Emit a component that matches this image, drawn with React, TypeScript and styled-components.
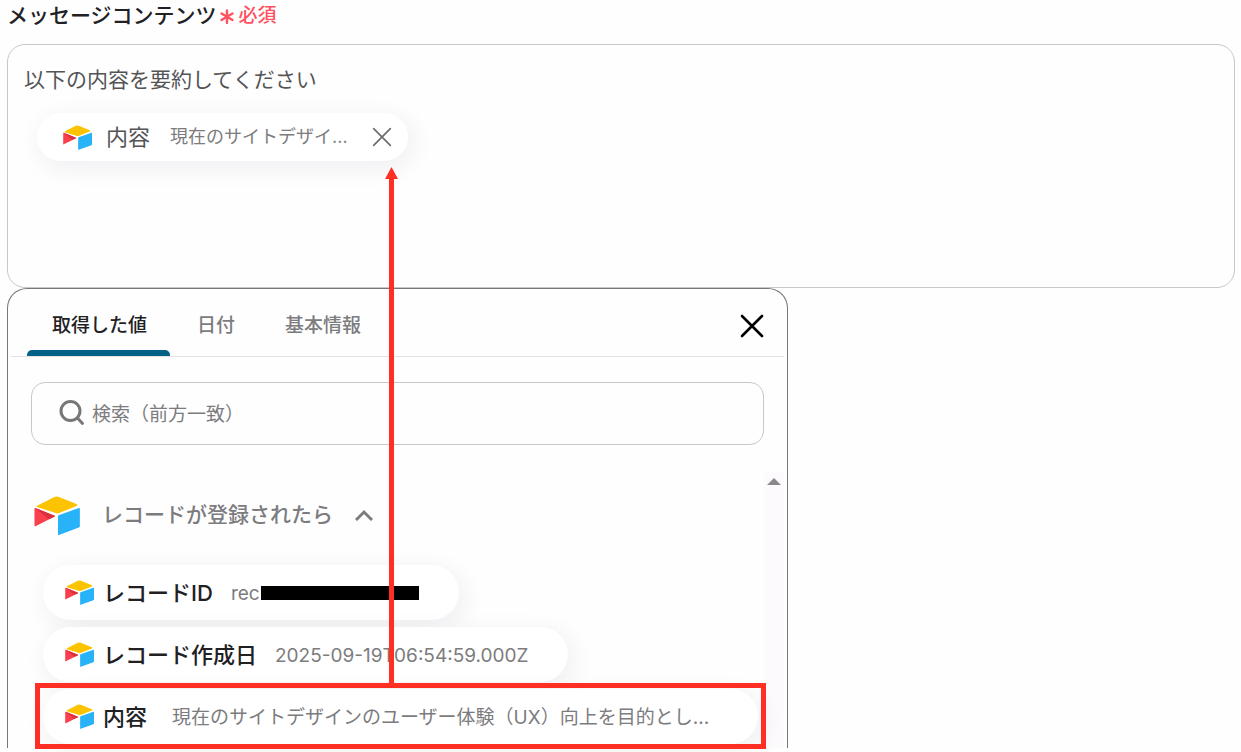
import React, { useState } from "react";
import styled, { createGlobalStyle } from "styled-components";

const GlobalStyle = createGlobalStyle`
  *, *::before, *::after { box-sizing: border-box; }
  body {
    margin: 0;
    background: #fefefe;
    color: #212124;
    font-family: Inter, "Noto Sans CJK JP", sans-serif;
  }
  button { font: inherit; color: inherit; background: none; border: 0; padding: 0; cursor: pointer; }
`;

const Page = styled.main`
  position: relative;
  padding: 0 6px 4px 7px;
`;

const FieldLabel = styled.div`
  display: flex;
  align-items: center;
  gap: 3px;
  height: 32px;
  margin-bottom: 12px;
  font-size: 21px;
  line-height: 32px;
  font-weight: 500;
`;

const Required = styled.span`
  display: flex;
  align-items: center;
  gap: 5px;
  font-size: 19px;
  color: #ff5260;
`;

const Editor = styled.div`
  height: 244px;
  padding: 19px 16px;
  border: 1px solid #c8c8ca;
  border-radius: 18px;
  font-size: 21px;
  line-height: 32px;
  color: #545457;
  outline: none;
`;

const Line = styled.p`
  margin: 0;
`;

const Chip = styled.span<{ $compact?: boolean; $fill?: boolean }>`
  display: flex;
  align-items: center;
  width: ${(p) => (p.$fill ? "100%" : "fit-content")};
  max-width: 100%;
  height: ${(p) => (p.$compact ? 48 : 55)}px;
  padding: ${(p) => (p.$compact ? "0 14px 0 26px" : "0 40px 0 22px")};
  border-radius: 28px;
  background: #fff;
  box-shadow: 4px 6px 24px rgba(60, 40, 80, 0.08);
  white-space: nowrap;
`;

const EditorChip = styled(Chip)`
  margin: 17px 0 0 13px;
`;

const ChipName = styled.span<{ $strong?: boolean }>`
  min-width: ${(p) => (p.$strong ? 51 : 44)}px;
  margin: ${(p) => (p.$strong ? "0 18px 0 9px" : "0 20px 0 14px")};
  font-size: 22px;
  line-height: 32px;
  font-weight: ${(p) => (p.$strong ? 500 : 400)};
  color: ${(p) => (p.$strong ? "#212124" : "#545457")};
`;

const ChipValue = styled.span<{ $small?: boolean }>`
  display: flex;
  align-items: center;
  padding-top: ${(p) => (p.$small ? 0 : 2)}px;
  font-size: ${(p) => (p.$small ? 18 : 19)}px;
  line-height: 28px;
  color: #7c7c7e;
`;

const Redacted = styled.span`
  width: 158px;
  height: 14px;
  margin: 0 0 2px 1px;
  background: #000;
`;

const IconButton = styled.button`
  display: flex;
  align-items: center;
  justify-content: center;
  width: 24px;
  height: 24px;
`;

const RemoveButton = styled(IconButton)`
  margin-left: 22px;
  color: #6c6c6f;
`;

const Panel = styled.section`
  max-width: 781px;
  height: 460px;
  border: 1px solid #77777a;
  border-bottom: 0;
  border-radius: 20px 20px 0 0;
`;

const PanelHeader = styled.div`
  display: flex;
  align-items: center;
  justify-content: space-between;
  height: 68px;
  margin: 0 3px;
  padding: 0 20px 0 16px;
  border-bottom: 1px solid #e4e4e6;
`;

const TabList = styled.div`
  display: flex;
  gap: 2px;
  height: 100%;
`;

const Tab = styled.button<{ $active: boolean }>`
  position: relative;
  padding: 6px 23px 0 25px;
  font-size: 19px;
  line-height: 28px;
  font-weight: 500;
  color: ${(p) => (p.$active ? "#212124" : "#7c7c7e")};

  &::after {
    content: "";
    display: ${(p) => (p.$active ? "block" : "none")};
    position: absolute;
    left: 0;
    right: 0;
    bottom: 0;
    height: 6px;
    border-radius: 5px 5px 0 0;
    background: #056286;
  }
`;

const CloseButton = styled(IconButton)`
  margin-top: 6px;
  color: #000;
`;

const SearchBox = styled.label`
  display: flex;
  align-items: center;
  gap: 7px;
  height: 63px;
  margin: 25px 23px 0;
  padding: 0 26px;
  border: 1px solid #c8c8ca;
  border-radius: 14px;
  color: #77777a;
`;

const SearchInput = styled.input`
  flex: 1;
  min-width: 0;
  padding: 2px 0 0;
  border: 0;
  outline: 0;
  background: none;
  font: inherit;
  font-size: 19px;
  line-height: 28px;
  color: #212124;

  &::placeholder { color: #7c7c7e; opacity: 1; }
`;

const Results = styled.div`
  display: flex;
  height: 276px;
  margin: 27px 3px 0 0;
`;

const ResultList = styled.div`
  flex: 1;
  min-width: 0;
  padding: 10px 6px 0 26px;
`;

const ScrollTrack = styled.div`
  display: flex;
  justify-content: center;
  width: 20px;
  padding-top: 6px;
  background: #fcfafd;
`;

const GroupToggle = styled.button`
  display: flex;
  align-items: center;
  height: 66px;
  font-size: 21px;
  line-height: 32px;
  font-weight: 500;
  color: #7c7c7e;

  span { margin: 0 22px; }
`;

const Items = styled.ul`
  display: flex;
  flex-direction: column;
  gap: 7px;
  margin: 17px 0 0 9px;
  padding: 0;
  list-style: none;
`;

const Item = styled.li`
  position: relative;
`;

const Callout = styled.span`
  position: absolute;
  inset: -6px -8px -5px -8px;
  border: 5px solid #ff2f24;
  pointer-events: none;
`;

const CalloutArrow = styled.svg`
  position: absolute;
  top: 167px;
  left: 384px;
  pointer-events: none;
`;

function AppLogo({ width, height }: { width: number; height: number }) {
  return (
    <svg width={width} height={height} viewBox="44 47 136 116" aria-hidden="true">
      <path fill="#fcc400" d="M53 76L104 50Q111 47 118 50L170 71Q175 74 170 77L120 97Q113 100 106 97L53 80Q50 78 53 76Z" />
      <path fill="#28b3f8" d="M115 107Q115 105 117 104L177 83Q180 82 180 85L180 137Q180 140 177 141L118 163Q115 164 115 161Z" />
      <path fill="#f9404c" d="M45 85Q45 82 48 83L105 106Q107 107 105 108L48 137Q45 138 45 135Z" />
      <path fill="#d9303f" d="M48 83L105 106Q107 107 105 108L88 116Z" />
    </svg>
  );
}

function Cross({ size, stroke }: { size: number; stroke: number }) {
  return (
    <svg width={size} height={size} viewBox="0 0 24 24" fill="none" stroke="currentColor" strokeWidth={stroke} strokeLinecap="round" aria-hidden="true">
      <path d="M2 2L22 22M22 2L2 22" />
    </svg>
  );
}

const tabs = ["取得した値", "日付", "基本情報"];

const items = [
  { name: "レコードID", value: "rec", redacted: true },
  { name: "レコード作成日", value: "2025-09-19T06:54:59.000Z" },
  { name: "内容", value: "現在のサイトデザインのユーザー体験（UX）向上を目的とし...", highlighted: true },
];

export default function App() {
  const [active, setActive] = useState(0);
  return (
    <>
      <GlobalStyle />
      <Page>
        <FieldLabel>
          <span id="message-label">メッセージコンテンツ</span>
          <Required>
            <svg width="14" height="16" viewBox="0 0 14 16" stroke="currentColor" strokeWidth="2.4" strokeLinecap="round" aria-hidden="true">
              <path d="M7 2.500V15M1.500 5.500L12.500 12M12.500 5.500L1.500 12" />
            </svg>
            必須
          </Required>
        </FieldLabel>
        <Editor role="textbox" aria-multiline="true" aria-labelledby="message-label" contentEditable suppressContentEditableWarning spellCheck={false}>
          <Line>以下の内容を要約してください</Line>
          <EditorChip $compact contentEditable={false}>
            <AppLogo width={29} height={25} />
            <ChipName>内容</ChipName>
            <ChipValue $small>現在のサイトデザイ...</ChipValue>
            <RemoveButton type="button" aria-label="削除">
              <Cross size={20} stroke={2} />
            </RemoveButton>
          </EditorChip>
        </Editor>
        <Panel>
          <PanelHeader>
            <TabList role="tablist">
              {tabs.map((label, i) => (
                <Tab key={label} type="button" role="tab" aria-selected={i === active} $active={i === active} onClick={() => setActive(i)}>
                  {label}
                </Tab>
              ))}
            </TabList>
            <CloseButton type="button" aria-label="閉じる">
              <Cross size={24} stroke={2.6} />
            </CloseButton>
          </PanelHeader>
          <SearchBox>
            <svg width="27" height="27" viewBox="0 0 27 27" fill="none" stroke="currentColor" strokeWidth="3" strokeLinecap="round" aria-hidden="true">
              <circle cx="12.500" cy="11" r="9.500" />
              <path d="M19.500 18L24.500 23.500" />
            </svg>
            <SearchInput type="text" aria-label="検索" placeholder="検索（前方一致）" />
          </SearchBox>
          <Results>
            <ResultList>
              <GroupToggle type="button" aria-expanded="true">
                <AppLogo width={46} height={39} />
                <span>レコードが登録されたら</span>
                <svg width="18" height="12" viewBox="0 0 18 12" fill="none" stroke="currentColor" strokeWidth="3" aria-hidden="true">
                  <path d="M1 11L9 3L17 11" />
                </svg>
              </GroupToggle>
              <Items>
                {items.map((item) => (
                  <Item key={item.name}>
                    <Chip $fill={item.highlighted}>
                      <AppLogo width={29} height={25} />
                      <ChipName $strong>{item.name}</ChipName>
                      <ChipValue>
                        {item.value}
                        {item.redacted && <Redacted />}
                      </ChipValue>
                    </Chip>
                    {item.highlighted && <Callout />}
                  </Item>
                ))}
              </Items>
            </ResultList>
            <ScrollTrack>
              <svg width="14" height="7" viewBox="0 0 14 7" aria-hidden="true">
                <path fill="#89898c" d="M7 0L14 7H0Z" />
              </svg>
            </ScrollTrack>
          </Results>
        </Panel>
        <CalloutArrow width="15" height="518" viewBox="0 0 15 518" aria-hidden="true">
          <path fill="#ff2f24" d="M7.500 0L14 12H10V518H5V12H1Z" />
        </CalloutArrow>
      </Page>
    </>
  );
}
